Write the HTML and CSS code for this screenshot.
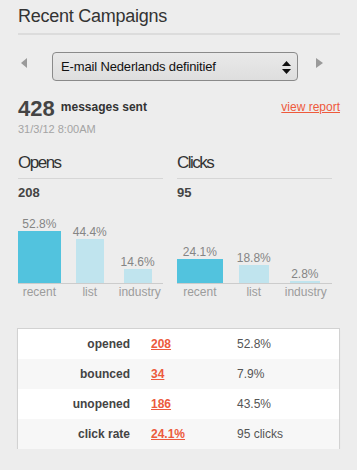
FILE: index.html
```html
<!DOCTYPE html>
<html lang="en">
<head>
    <meta charset="UTF-8">
    <title>Recent Campaigns</title>
    <link rel="stylesheet" href="styles.css">
</head>
<body>
    <div class="widget">
        <h2 class="title">Recent Campaigns</h2>

        <div class="picker">
            <svg class="arrow prev" width="6" height="10" viewBox="0 0 6 10"><polygon points="6,0 6,10 0,5" fill="#9a9a9a"/></svg>
            <div class="select">
                <span>E-mail Nederlands definitief</span>
                <svg class="updown" width="9" height="13" viewBox="0 0 9 13"><polygon points="4.5,0 9,5 0,5" fill="#111"/><polygon points="0,8 9,8 4.5,13" fill="#111"/></svg>
            </div>
            <svg class="arrow next" width="7" height="10" viewBox="0 0 7 10"><polygon points="0,0 7,5 0,10" fill="#9a9a9a"/></svg>
        </div>

        <div class="summary">
            <div class="sent">
                <div class="sent-line"><span class="count">428</span> <span class="what">messages sent</span></div>
                <div class="date">31/3/12 8:00AM</div>
            </div>
            <a class="report" href="#">view report</a>
        </div>

        <div class="charts">
            <div class="chart">
                <h3>Opens</h3>
                <div class="total">208</div>
                <div class="plot">
                    <div class="col recent"><span class="pct">52.8%</span><div class="bar" style="height: 52px"></div></div>
                    <div class="col list"><span class="pct">44.4%</span><div class="bar" style="height: 44px"></div></div>
                    <div class="col industry"><span class="pct">14.6%</span><div class="bar" style="height: 14px"></div></div>
                </div>
                <div class="axis">
                    <span>recent</span><span>list</span><span>industry</span>
                </div>
            </div>
            <div class="chart">
                <h3>Clicks</h3>
                <div class="total">95</div>
                <div class="plot">
                    <div class="col recent"><span class="pct">24.1%</span><div class="bar" style="height: 24px"></div></div>
                    <div class="col list"><span class="pct">18.8%</span><div class="bar" style="height: 18px"></div></div>
                    <div class="col industry"><span class="pct">2.8%</span><div class="bar" style="height: 2.5px"></div></div>
                </div>
                <div class="axis">
                    <span>recent</span><span>list</span><span>industry</span>
                </div>
            </div>
        </div>

        <table class="stats">
            <tr>
                <td class="name">opened</td>
                <td class="num"><a href="#">208</a></td>
                <td class="rate">52.8%</td>
            </tr>
            <tr>
                <td class="name">bounced</td>
                <td class="num"><a href="#">34</a></td>
                <td class="rate">7.9%</td>
            </tr>
            <tr>
                <td class="name">unopened</td>
                <td class="num"><a href="#">186</a></td>
                <td class="rate">43.5%</td>
            </tr>
            <tr>
                <td class="name">click rate</td>
                <td class="num"><a href="#">24.1%</a></td>
                <td class="rate">95 clicks</td>
            </tr>
        </table>
    </div>
</body>
</html>
```

FILE: styles.css
```css
body {
    font-family: "Liberation Sans", Arial, sans-serif;
    background-color: #ededed;
    color: #333;
    margin: 0;
    padding: 5px 17px 0 18px;
}

.title {
    margin: 0;
    font-size: 18px;
    font-weight: normal;
    line-height: 22px;
    letter-spacing: -0.25px;
    color: #333;
    padding-bottom: 6px;
    border-bottom: 2px solid #dcdcdc;
}

.picker {
    display: flex;
    align-items: flex-start;
    margin-top: 17px;
}

.arrow {
    display: block;
    margin-top: 6px;
}

.arrow.prev {
    margin-left: 3px;
    margin-right: 25px;
}

.arrow.next {
    margin-left: 18px;
}

.select {
    width: 246px;
    height: 29px;
    box-sizing: border-box;
    display: flex;
    align-items: center;
    justify-content: space-between;
    padding: 0 6px 0 8px;
    border: 1px solid #8a8a8a;
    border-radius: 4px;
    background: linear-gradient(#e9e9e9, #dedede);
    font-size: 13px;
    letter-spacing: -0.15px;
    color: #111;
}

.updown {
    display: block;
    margin-top: 1px;
}

.summary {
    display: flex;
    justify-content: space-between;
    align-items: flex-start;
    margin-top: 15px;
}

.sent-line {
    font-size: 22px;
    line-height: 26px;
}

.count {
    font-weight: bold;
    color: #444;
}

.what {
    font-size: 12px;
    font-weight: bold;
    line-height: 14px;
    color: #333;
    vertical-align: 5px;
}

.date {
    font-size: 11px;
    line-height: 14px;
    color: #a4a4a4;
}

.report {
    margin-top: 4px;
    font-size: 12px;
    line-height: 14px;
    color: #ee5a3c;
    text-decoration: underline;
}

.charts {
    display: grid;
    grid-template-columns: 145px 155px;
    gap: 14px;
    margin-top: 17px;
}

.chart h3 {
    margin: 0;
    font-size: 17px;
    font-weight: normal;
    line-height: 20px;
    letter-spacing: -1.5px;
    color: #333;
    padding-bottom: 5px;
    border-bottom: 1px solid #d6d6d6;
}

.total {
    margin-top: 6px;
    font-size: 13px;
    font-weight: bold;
    line-height: 16px;
    color: #444;
}

.plot,
.axis {
    display: grid;
    grid-template-columns: 29.5% 40% 26%;
}

.plot {
    height: 80px;
    margin-top: 2px;
    border-bottom: 1px solid #cccccc;
}

.col {
    display: flex;
    flex-direction: column;
    align-items: center;
    justify-content: flex-end;
}

.pct {
    font-size: 12px;
    line-height: 14px;
    color: #858585;
}

.bar {
    background-color: #c0e4ee;
}

.recent .bar {
    width: 100%;
    background-color: #52c3de;
}

.list .bar {
    width: 49%;
}

.industry .bar {
    width: 74%;
}

.axis {
    margin-top: 1px;
    font-size: 12px;
    line-height: 14px;
    color: #9c9c9c;
    text-align: center;
}

.stats {
    width: 321px;
    margin-top: 30px;
    border-collapse: collapse;
    background-color: #ffffff;
    box-shadow: 0 0 0 1px #d2d2d2, 0 1px 2px rgba(0, 0, 0, 0.12);
    font-size: 12px;
}

.stats td {
    height: 30px;
    padding: 0;
}

.stats tr:nth-child(even) {
    background-color: #f7f7f7;
}

.stats .name {
    width: 112px;
    padding-right: 21px;
    text-align: right;
    font-weight: bold;
    color: #444;
}

.stats .num {
    width: 86px;
}

.stats .num a {
    font-weight: bold;
    color: #ec5a3d;
    text-decoration: underline;
}

.stats .rate {
    color: #555;
}
```
